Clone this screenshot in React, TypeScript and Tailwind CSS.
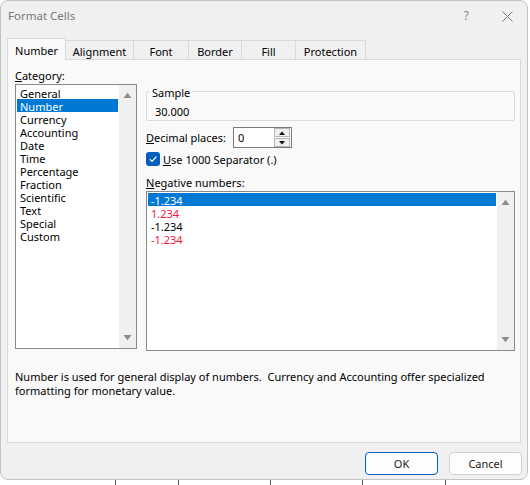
import React from "react";

const UpTri = ({ c = "#8b8b8b" }: { c?: string }) => (
  <svg width="9" height="6" viewBox="0 0 9 6"><path d="M0.5 6 L4.5 0.8 L8.5 6 Z" fill={c} /></svg>
);
const DownTri = ({ c = "#8b8b8b" }: { c?: string }) => (
  <svg width="9" height="6" viewBox="0 0 9 6"><path d="M0.5 0 L4.5 5.2 L8.5 0 Z" fill={c} /></svg>
);

function Scrollbar() {
  return (
    <div className="w-[17px] h-full bg-[#f0f0f0] flex flex-col items-center justify-between pt-[7px] pb-[7px]">
      <UpTri />
      <DownTri />
    </div>
  );
}

const categories = [
  "General", "Number", "Currency", "Accounting", "Date", "Time",
  "Percentage", "Fraction", "Scientific", "Text", "Special", "Custom",
];

const negs = [
  { t: "-1.234", c: "text-white", sel: true },
  { t: "1.234", c: "text-[#f5163c]" },
  { t: "-1.234", c: "text-black" },
  { t: "-1.234", c: "text-[#f5163c]" },
];

const tabs = [
  { t: "Number", w: "w-[59px]" },
  { t: "Alignment", w: "w-[68px]" },
  { t: "Font", w: "w-[55px]" },
  { t: "Border", w: "w-[53px]" },
  { t: "Fill", w: "w-[54px]" },
  { t: "Protection", w: "w-[70px]" },
];

export default function App() {
  return (
    <div className="w-[530px] h-[485px] bg-white flex flex-col font-['Noto_Sans',sans-serif] text-[11px] leading-[14px] text-black">
      <div className="w-[528px] h-[480px] shrink-0 bg-[#f0f0f0] border border-[#c4c4c4] rounded-[8px] flex flex-col overflow-hidden">
        {/* Title bar */}
        <div className="h-[38px] shrink-0 flex items-start pt-[8px] pl-[7px] pr-[14px] text-[#777777]">
          <span className="text-[11.5px]">Format Cells</span>
          <div className="flex-1" />
          <span className="mr-[33px] text-[12px] text-[#8a8a8a]">?</span>
          <svg width="11" height="11" viewBox="0 0 11 11" className="mt-[2px]">
            <path d="M0.5 0.5 L10.5 10.5 M10.5 0.5 L0.5 10.5" stroke="#7a7a7a" strokeWidth="1" />
          </svg>
        </div>

        {/* Tabs */}
        <div className="h-[21px] shrink-0 flex items-end pl-[6px] relative z-10 -mb-px">
          {tabs.map((tab, i) =>
            i === 0 ? (
              <div
                key={tab.t}
                className={`${tab.w} h-[22px] bg-[#f9f9f9] border border-b-0 border-[#d9d9d9] flex items-center justify-center pt-[2px]`}
              >
                {tab.t}
              </div>
            ) : (
              <div
                key={tab.t}
                className={`${tab.w} h-[20px] bg-[#f0f0f0] border border-l-0 border-[#dadada] flex items-center justify-center pt-[4px]`}
              >
                {tab.t}
              </div>
            )
          )}
        </div>

        {/* Panel */}
        <div className="ml-[6px] w-[514px] h-[384px] shrink-0 border border-[#d9d9d9] bg-[#f9f9f9] flex flex-col pl-[7px] pt-[9px]">
          <div className="flex">
            {/* Category column */}
            <div className="w-[122px] flex flex-col">
              <div>
                <span className="underline">C</span>ategory:
              </div>
              <div className="mt-[1px] h-[265px] border border-[#8a8a8a] bg-white flex">
                <div className="flex-1 pt-[1px] px-[1px] flex flex-col">
                  {categories.map((c) => (
                    <div
                      key={c}
                      className={`h-[13px] leading-[15px] pl-[3px] ${c === "Number" ? "bg-[#0078d4] text-white" : ""}`}
                    >
                      {c}
                    </div>
                  ))}
                </div>
                <Scrollbar />
              </div>
            </div>

            {/* Right column */}
            <div className="ml-[9px] w-[369px] flex flex-col">
              <fieldset className="mt-[15px] border border-[#dcdcdc] rounded-[2px] pl-[8px] pt-[7px] pb-[1px]">
                <legend className="ml-[-5px] px-[2px] h-[14px] leading-[18px]">Sample</legend>
                <div>30.000</div>
              </fieldset>

              <div className="mt-[6px] h-[21px] flex items-center">
                <div className="w-[87px] leading-[16px]">
                  <span className="underline">D</span>ecimal places:
                </div>
                <div className="w-[59px] h-[21px] border border-[#7a7a7a] bg-white flex items-center">
                  <span className="pl-[4px] flex-1 leading-[16px]">0</span>
                  <div className="w-[16px] h-[19px] mr-[1px] flex flex-col">
                    <div className="h-[9px] bg-[#f0f0f0] border border-[#b5b5b5] flex items-center justify-center">
                      <svg width="6" height="4" viewBox="0 0 6 4"><path d="M0 4 L3 0.5 L6 4 Z" fill="#111" /></svg>
                    </div>
                    <div className="h-[9px] mt-[1px] bg-[#f0f0f0] border border-[#b5b5b5] flex items-center justify-center">
                      <svg width="6" height="4" viewBox="0 0 6 4"><path d="M0 0 L3 3.5 L6 0 Z" fill="#111" /></svg>
                    </div>
                  </div>
                </div>
              </div>

              <div className="mt-[4px] h-[14px] flex items-start">
                <div className="w-[14px] h-[14px] rounded-[3px] bg-[#005fb8] flex items-center justify-center">
                  <svg width="10" height="10" viewBox="0 0 10 10">
                    <path d="M1.8 5.2 L4 7.4 L8.4 2.6" stroke="white" strokeWidth="1.3" fill="none" />
                  </svg>
                </div>
                <span className="ml-[3px] pt-[1px] leading-[13px]">
                  <span className="underline">U</span>se 1000 Separator (.)
                </span>
              </div>

              <div className="mt-[9px] leading-[16px]">
                <span className="underline">N</span>egative numbers:
              </div>
              <div className="h-[160px] border border-[#8a8a8a] bg-white flex">
                <div className="flex-1 pt-[1px] px-[1px] flex flex-col">
                  {negs.map((n, i) => (
                    <div
                      key={i}
                      className={`h-[13px] leading-[15px] pl-[3px] ${n.c} ${n.sel ? "bg-[#0078d4]" : ""}`}
                    >
                      {n.t}
                    </div>
                  ))}
                </div>
                <Scrollbar />
              </div>
            </div>
          </div>

          <div className="mt-[19px] w-[490px]">
            Number is used for general display of numbers.&nbsp; Currency and Accounting offer specialized formatting for monetary value.
          </div>
        </div>

        {/* Footer */}
        <div className="mt-[9px] flex justify-end pr-[5px] gap-[11px]">
          <button className="w-[73px] h-[23px] rounded-[4px] border-[1.5px] border-[#005fb8] bg-[#fdfdfd] text-[#1a1a1a] flex items-center justify-center pt-[1px]">
            OK
          </button>
          <button className="w-[73px] h-[23px] rounded-[4px] border border-[#d0d0d0] bg-[#fdfdfd] text-[#1a1a1a] flex items-center justify-center pt-[1px]">
            Cancel
          </button>
        </div>
      </div>

      {/* Spreadsheet grid peeking below */}
      <div className="flex-1 flex">
        <div className="w-[115px]" />
        <div className="w-[63px] border-l border-[#555]" />
        <div className="w-[92px] border-l border-[#555]" />
        <div className="w-[92px] border-l border-[#555]" />
        <div className="w-[83px] border-l border-[#555]" />
        <div className="w-[73px] border-l border-[#555]" />
      </div>
    </div>
  );
}
